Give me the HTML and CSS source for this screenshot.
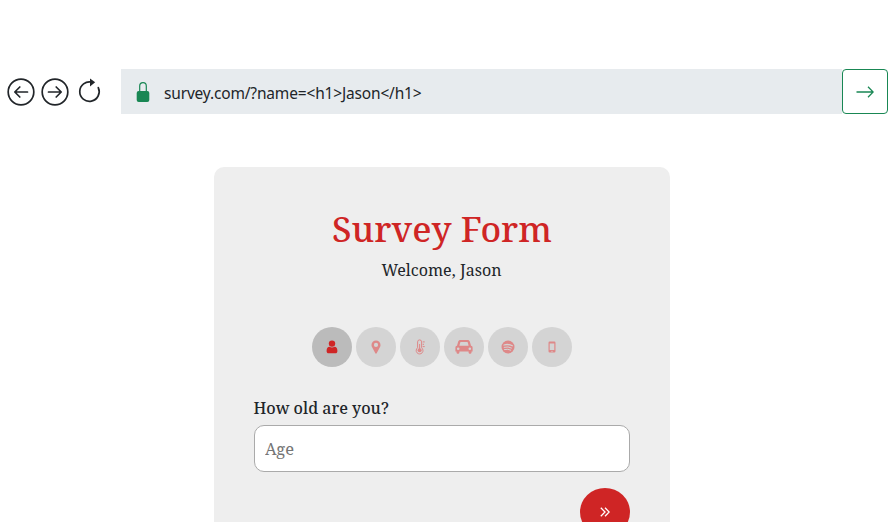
FILE: index.html
```html
<!DOCTYPE html>
<html lang="en">
<head>
<meta charset="utf-8">
<title>Survey Form</title>
<link rel="stylesheet" href="styles.css">
</head>
<body>
<header class="browser">
  <nav class="nav">
    <svg class="nav-icon" viewBox="0 0 28 28"><circle cx="14" cy="14" r="12.8"/><path d="M20.5 14H8M12.8 9l-5 5 5 5"/></svg>
    <svg class="nav-icon" viewBox="0 0 28 28"><circle cx="14" cy="14" r="12.8"/><path d="M7.5 14H20M15.2 9l5 5-5 5"/></svg>
    <svg class="nav-icon reload" viewBox="0 0 28 28"><path d="M15.8 4.2A9.700 9.700 0 1 0 22.300 9.600"/><path class="solid" d="M14 .5l5.200 3.800L14 8.400z"/></svg>
  </nav>
  <div class="address">
    <svg class="lock" viewBox="0 0 14 20"><path class="shackle" d="M3.7 9.5V4a3.3 3.3 0 0 1 6.6 0v5.5"/><rect x=".7" y="9" width="12.6" height="11" rx="2"/></svg>
    <span class="url">survey.com/?name=&lt;h1&gt;Jason&lt;/h1&gt;</span>
  </div>
  <button class="go" aria-label="Go"><svg viewBox="0 0 18 12"><path d="M.5 6h16.7M12 .8L17.2 6 12 11.2"/></svg></button>
</header>
<main class="card">
  <h1 class="title">Survey Form</h1>
  <p class="welcome">Welcome, Jason</p>
  <div class="steps">
    <span class="step active"><svg viewBox="0 0 20 20"><circle cx="10" cy="6.6" r="3.2"/><path d="M4.6 14c0-3 1.3-4.3 2.8-4.3 1.500 1.100 3.700 1.100 5.200 0 1.500 0 2.800 1.300 2.800 4.300 0 1.700-.8 2.300-2 2.300H6.600c-1.200 0-2-.6-2-2.300z"/></svg></span>
    <span class="step"><svg viewBox="0 0 20 20"><path fill-rule="evenodd" d="M10 3.400a4.500 4.500 0 0 0-4.500 4.500c0 1 .2 1.500.5 2.100l3.200 6.100c.3.700 1.200.7 1.600 0L14 10c.3-.6.500-1.100.5-2.100A4.500 4.500 0 0 0 10 3.400zm0 2.400a2.100 2.100 0 1 1 0 4.200 2.100 2.100 0 0 1 0-4.200z"/></svg></span>
    <span class="step"><svg viewBox="0 0 20 20"><path class="line" d="M7.600 10.800V4.900a2 2 0 0 1 4 0v5.900a3.400 3.400 0 1 1-4 0z"/><circle cx="9.600" cy="13.300" r="2"/><path class="line" d="M9.600 7v5M12.700 4.900h2M12.700 7.300h1.300M12.700 9.600h2"/></svg></span>
    <span class="step"><svg viewBox="0 0 20 20"><path fill-rule="evenodd" d="M3 8.800l1.200-4.200C4.500 3.600 5.300 3 6.400 3h7.200c1.100 0 1.900.6 2.200 1.600L17 8.800c1.100.1 1.600.9 1.600 1.900v3.700h-1.100v1.100c0 1.800-2.900 1.800-2.900 0v-1.100H5.400v1.100c0 1.800-2.900 1.800-2.900 0v-1.100H1.400v-3.700C1.400 9.700 1.900 8.900 3 8.800zm2.400 0h9.200l-.8-3.400q-.1-.4-.5-.4H6.700q-.4 0-.5.4zm-1.200 1.700a1.300 1.300 0 1 0 0 2.600 1.300 1.300 0 0 0 0-2.600zm11.600 0a1.300 1.300 0 1 0 0 2.600 1.300 1.300 0 0 0 0-2.600z"/></svg></span>
    <span class="step"><svg viewBox="0 0 20 20"><circle cx="10" cy="10" r="6.500"/><path class="cut thick" d="M6 8q4.500-1.300 8.300.8"/><path class="cut" d="M6.200 10.300q4-1.100 7.300.7M6.500 12.500q3.500-.8 6.200.6"/></svg></span>
    <span class="step"><svg viewBox="0 0 20 20"><path fill-rule="evenodd" d="M7.700 4.500h4.600q1.200 0 1.200 1.200v8.600q0 1.200-1.200 1.200H7.700q-1.200 0-1.200-1.200V5.700q0-1.200 1.200-1.200zM7.700 6.600v6.300h4.600V6.600zm2.300 7.100a.6.6 0 1 0 0 1.200.6.6 0 0 0 0-1.200z"/></svg></span>
  </div>
  <label class="question" for="age">How old are you?</label>
  <input class="age" id="age" type="text" placeholder="Age">
  <button class="next" aria-label="Next"><svg viewBox="0 0 10 10"><path d="M.8.8L5 5 .8 9.200M5 .8L9.200 5 5 9.200"/></svg></button>
</main>
</body>
</html>
```
FILE: styles.css
```css
* { box-sizing: border-box; }
body {
  margin: 0;
  height: 522px;
  overflow: hidden;
  background: #fff;
  color: #212529;
  font: 16px/24px "Noto Serif", "DejaVu Serif Condensed", "DejaVu Serif", serif;
}
.browser {
  display: flex;
  height: 45px;
  margin: 69px 7px 53px;
}
.nav {
  display: flex;
  gap: 6px;
  width: 114px;
  padding-top: 9px;
}
.nav-icon {
  flex: none;
  width: 28px;
  height: 28px;
  fill: none;
  stroke: #212529;
  stroke-width: 1.700;
  stroke-linecap: round;
  stroke-linejoin: round;
}
.nav-icon.reload { margin-left: 1px; }
.nav-icon .solid { fill: #212529; stroke: none; }
.address {
  flex: 1;
  display: flex;
  align-items: center;
  padding-left: 15px;
  background: #e7ebee;
}
.lock { width: 14px; height: 20px; margin-right: 14px; fill: #198754; }
.shackle { fill: none; stroke: #198754; stroke-width: 1.200; }
.url {
  padding-top: 2px;
  font-family: "Noto Sans", sans-serif;
  font-size: 15.500px;
  letter-spacing: -0.170px;
  white-space: nowrap;
}
.go {
  display: grid;
  place-items: center;
  width: 46px;
  padding: 0;
  border: 1px solid #198754;
  border-radius: 4px;
  background: #fff;
}
.go svg { width: 18px; height: 12px; fill: none; stroke: #198754; stroke-width: 1.300; }
.card {
  display: flex;
  flex-direction: column;
  width: 456px;
  height: 355px;
  margin-left: 214px;
  padding: 40px 40px 0;
  border-radius: 10px 10px 0 0;
  background: #eee;
  overflow: hidden;
}
.card > * { flex: none; }
.title {
  margin: 0 0 8px;
  color: #cf2525;
  font-size: 35.300px;
  font-weight: 500;
  line-height: 43px;
  text-align: center;
}
.welcome { margin: 0 1px 45px 0; text-align: center; letter-spacing: 0.030px; }
.steps { display: flex; justify-content: center; gap: 4px; margin-bottom: 29px; }
.step {
  display: grid;
  place-items: center;
  width: 40px;
  height: 40px;
  border-radius: 50%;
  background: #bbb;
  opacity: .5;
}
.step.active { opacity: 1; }
.step svg { width: 20px; height: 20px; margin-right: 1px; fill: #cf2525; }
.step .line { fill: none; stroke: #cf2525; stroke-width: 1; }
.step .cut { fill: none; stroke: #bbb; stroke-width: 1; stroke-linecap: round; }
.step .thick { stroke-width: 1.300; }
.question { margin: 0 0 5px -0.500px; font-weight: 500; }
.age {
  width: 376px;
  height: 47px;
  padding: 0 10px;
  border: 1px solid #aaa;
  border-radius: 10px;
  background: #fff;
  font: inherit;
  font-size: 16.500px;
}
.age::placeholder { color: #757575; opacity: 1; }
.next {
  display: grid;
  place-items: center;
  align-self: flex-end;
  width: 50px;
  height: 48px;
  margin-top: 16px;
  padding: 0;
  border: 0;
  border-radius: 50%;
  background: #cf2525;
}
.next svg { width: 10px; height: 10px; fill: none; stroke: #fff; stroke-width: 1.300; }
```
